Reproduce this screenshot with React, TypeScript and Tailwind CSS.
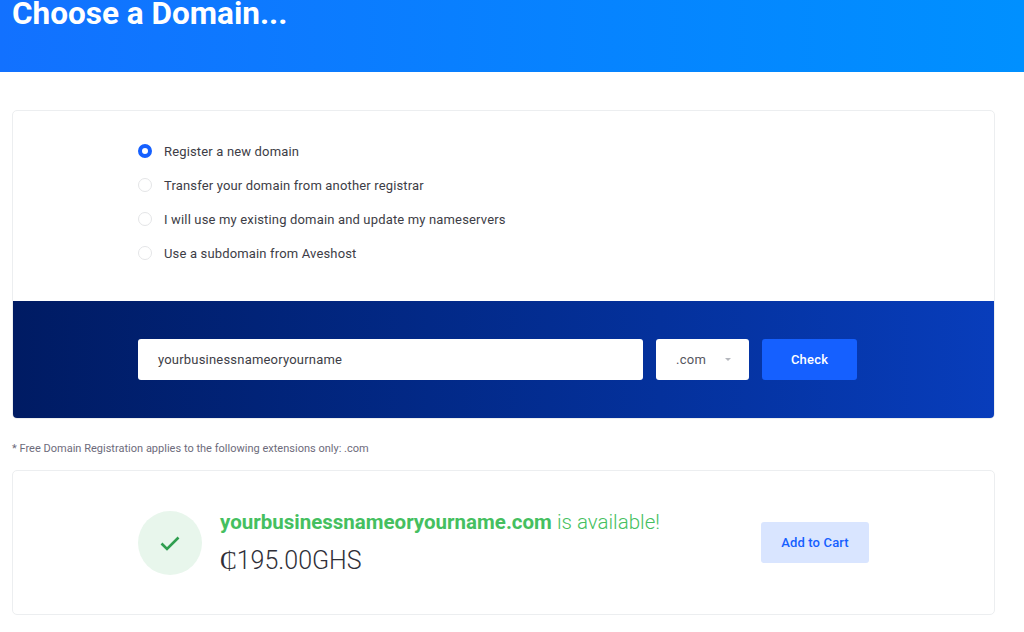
const options = [
  "Register a new domain",
  "Transfer your domain from another registrar",
  "I will use my existing domain and update my nameservers",
  "Use a subdomain from Aveshost",
];

export default function App() {
  return (
    <div className="h-[632px] w-[1024px] overflow-hidden bg-white font-['Roboto',sans-serif]">
      {/* Header */}
      <div className="h-[72px] overflow-hidden bg-gradient-to-r from-[#1271ff] to-[#0090ff] px-3">
        <h1 className="-mt-[6px] text-[31.5px] leading-[40px] font-bold text-white">
          Choose a Domain...
        </h1>
      </div>

      <div className="w-[1007px] px-3 pt-[38px]">
        {/* Domain card */}
        <div className="overflow-hidden rounded-[5px] border border-[#eceef0]">
          <div className="flex h-[190px] flex-col gap-[14px] px-[125px] pt-[30px]">
            {options.map((o, i) => (
              <label key={o} className="flex h-5 items-center gap-[12px] text-[13px] leading-[22px] tracking-[0.16px] text-[#3d3d46]">
                {i === 0 ? (
                  <span className="h-[14px] w-[14px] rounded-full border-[4px] border-[#1560ff] bg-white" />
                ) : (
                  <span className="h-[14px] w-[14px] rounded-full border border-[#e4e5e7] bg-white" />
                )}
                <span className="mt-[2px]">{o}</span>
              </label>
            ))}
          </div>
          <div className="flex h-[117px] items-start gap-[13px] bg-gradient-to-r from-[#001b63] to-[#083dbb] px-[125px] pt-[38px]">
            <div className="flex h-[41px] w-[505px] items-center rounded-[3px] bg-white px-5 text-[13px] tracking-[0.2px] text-[#3d3d46]">
              yourbusinessnameoryourname
            </div>
            <div className="flex h-[41px] w-[93px] items-center justify-between rounded-[3px] bg-white pl-5 pr-[18px] text-[13px] tracking-[0.25px] text-[#55555e]">
              .com
              <span className="h-0 w-0 border-x-[3px] border-t-[3px] border-x-transparent border-t-[#b5b7bd]" />
            </div>
            <button type="button" className="h-[41px] w-[95px] rounded-[3px] bg-[#1560ff] text-[13px] font-medium tracking-[0.2px] text-white">
              Check
            </button>
          </div>
        </div>

        <p className="mt-[22px] text-[11px] leading-[16px] tracking-[0.01px] text-[#6d6b7b]">
          * Free Domain Registration applies to the following extensions only: .com
        </p>

        {/* Result card */}
        <div className="mt-[13px] flex h-[145px] items-center rounded-[5px] border border-[#eceef0] pl-[125px]">
          <div className="flex h-16 w-16 items-center justify-center rounded-full bg-[#e8f6ec]">
            <svg aria-hidden="true" className="h-6 w-6" viewBox="0 0 24 24" fill="none">
              <path d="M3.5 12.5l5.5 5.5L20.5 6.5" stroke="#2f9e4f" strokeWidth={2.6} />
            </svg>
          </div>
          <div className="ml-[18px] w-[541px]">
            <p className="mt-[1px] text-[20.5px] leading-[26px] text-[#45bf60]">
              <span className="font-bold">yourbusinessnameoryourname.com</span>{" "}
              <span className="font-light">is available!</span>
            </p>
            <p className="mt-[10px] text-[25px] leading-[32px] font-light text-[#2f2f38]">
              <span className="font-['Liberation_Serif',serif]">₵</span>195.00GHS
            </p>
          </div>
          <button type="button" className="h-[41px] w-[108px] rounded-[3px] bg-[#d9e5ff] text-[13px] font-medium tracking-[0.15px] text-[#1560ff]">
            Add to Cart
          </button>
        </div>
      </div>
    </div>
  );
}
